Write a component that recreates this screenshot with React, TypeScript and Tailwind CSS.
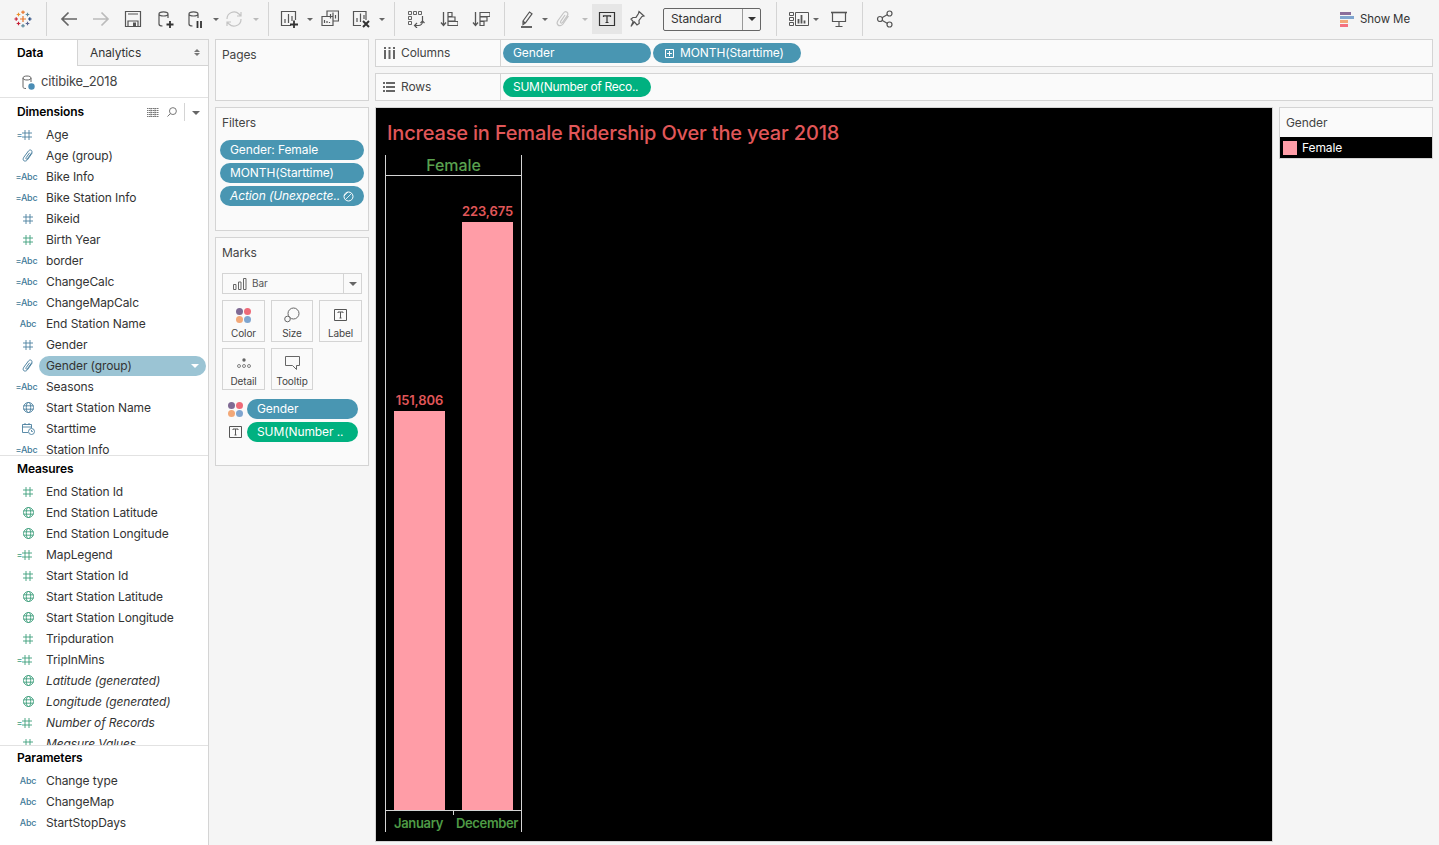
const ink = '#555555'

function Ic({ className = '', children }: { className?: string; children: React.ReactNode }) {
  return (
    <svg viewBox="0 0 18 18" fill="none" stroke={ink} strokeWidth="1.2" className={`w-[18px] h-[18px] shrink-0 ${className}`}>
      {children}
    </svg>
  )
}

function Caret({ className = '', light = false }: { className?: string; light?: boolean }) {
  return (
    <div className={`w-0 h-0 shrink-0 border-x-[3px] border-x-transparent border-t-[3px] mt-[1px] ${light ? 'border-t-[#bbbbbb]' : 'border-t-[#666666]'} ${className}`} />
  )
}

function Divider({ className = '' }: { className?: string }) {
  return <div className={`w-px h-[34px] bg-[#d4d4d4] shrink-0 ${className}`} />
}

function Db({ children }: { children?: React.ReactNode }) {
  return (
    <Ic>
      <path d="M3 4v10c0 1.2 1.4 2 3.5 2M3 4c0-1.3 1.7-2.2 4.5-2.2S12 2.700 12 4s-1.700 2-4.500 2S3 5.300 3 4zM12 4v4" />
      {children}
    </Ic>
  )
}

function Logo() {
  const c = (x: number, y: number, r: number, col: string) => (
    <path d={`M${x - r} ${y}h${2 * r}M${x} ${y - r}v${2 * r}`} stroke={col} strokeWidth="1.200" />
  )
  return (
    <Ic>
      {c(9, 9, 3, '#e8762b')}
      {c(9, 2.200, 1.800, '#e8762b')}
      {c(4.500, 4.500, 1.800, '#eb912b')}
      {c(13.500, 4.500, 1.800, '#5b879b')}
      {c(2.200, 9, 1.800, '#c72037')}
      {c(15.800, 9, 1.800, '#1f447e')}
      {c(4.500, 13.500, 1.800, '#c72037')}
      {c(13.500, 13.500, 1.800, '#5b6591')}
      {c(9, 15.800, 1.800, '#5b879b')}
    </Ic>
  )
}

function Toolbar() {
  return (
    <div className="h-[39px] pb-[1px] flex items-center shrink-0 bg-[#f5f5f5]">
      <div className="ml-[14px]"><Logo /></div>
      <Divider className="ml-[14px]" />
      <Ic className="ml-[13px]"><path d="M17 9H2M8.500 2.500 2 9l6.500 6.500" strokeWidth="1.700" stroke="#666666" /></Ic>
      <Ic className="ml-[14px]"><path d="M1 9h15M9.500 2.500 16 9l-6.500 6.500" strokeWidth="1.700" stroke="#bbbbbb" /></Ic>
      <Ic className="ml-[14px]"><path d="M1.500 1.500h15v15h-15zM4 16.500V11h10v5.500M4 4h10" /><path d="M9 12.500h3v4H9z" fill={ink} stroke="none" /></Ic>
      <div className="ml-[14px]"><Db><path d="M10.500 14.500h7M14 11v7" stroke="#333333" strokeWidth="1.800" /></Db></div>
      <div className="ml-[12px]"><Db><path d="M11.500 11v7M15 11v7" stroke="#333333" strokeWidth="1.800" /></Db></div>
      <Caret className="ml-[9px]" />
      <Ic className="ml-[6px]">
        <path d="M2 9a7 7 0 0 1 12-5l2 2M16 9a7 7 0 0 1-12 5l-2-2M16 2v4h-4M2 16v-4h4" stroke="#c4c4c4" />
      </Ic>
      <Caret className="ml-[10px]" light />
      <Divider className="ml-[9px]" />
      <Ic className="ml-[11px]">
        <path d="M11 15.500H1.500v-14h14V10M5 13V9M8.500 13V4M12 11V6" />
        <path d="M10 14.500h8M14 10.500v7.500" stroke="#333333" strokeWidth="1.800" />
      </Ic>
      <Caret className="ml-[9px]" />
      <Ic className="ml-[8px]">
        <path d="M6 6V1h11.500v10H12M1 6.500h11v9H1zM9.500 8.500V4M12 8.500V2.500M14.500 8.500V5M3.500 13v-3M6 13v-2M8.500 13v-1" />
      </Ic>
      <Ic className="ml-[13px]">
        <path d="M14 10V1.500H1.500v14H9M5 12V8M8.500 12V3.500M12 9V5" />
        <path d="m11 11 6 6M17 11l-6 6" stroke="#333333" strokeWidth="2" />
      </Ic>
      <Caret className="ml-[9px]" />
      <Divider className="ml-[9px]" />
      <Ic className="ml-[12px]">
        <path d="M1.500 1.500h3v3h-3zM6.500 1.500h3v3h-3zM11.500 1.500h3v3h-3zM1.500 6.500h3v3h-3zM1.500 11.500h3v3h-3z" strokeWidth="0.900" />
        <path d="M15.500 6v5.500a4 4 0 0 1-4 4H8" /><path d="m13.500 13 2-2 2 2M10 13l-2.500 2.500L10 18" />
      </Ic>
      <Ic className="ml-[15px]">
        <path d="M3.500 2v13M1 12.500l2.500 3 2.500-3" strokeWidth="1.300" />
        <path d="M8 2h4v4H8zM8 6.500h7v4H8zM8 11h10v4H8z" transform="translate(0 .5)" />
      </Ic>
      <Ic className="ml-[14px]">
        <path d="M3.500 2v13M1 12.500l2.500 3 2.500-3" strokeWidth="1.300" />
        <path d="M8 2h10v4H8zM8 6.500h7v4H8zM8 11h4v4H8z" transform="translate(0 .5)" />
      </Ic>
      <Divider className="ml-[14px]" />
      <Ic className="ml-[13px]">
        <path d="m5 11 6.500-9 2.500 1.800-6.500 9L5 14.500zM7 13l-2-2" />
        <path d="M3 17h11" strokeWidth="1.800" />
      </Ic>
      <Caret className="ml-[6px]" />
      <Ic className="ml-[7px]">
        <path d="M13.500 6 8 14c-1.500 2-4 2-5 1s-1-3 0-4.500L8.500 3c1-1.300 2.500-1.500 3.500-.8s1.200 2.300.3 3.500L7.500 12.500c-.5.700-1.200.8-1.700.4s-.5-1.100 0-1.800L10 5" stroke="#c4c4c4" />
      </Ic>
      <Caret className="ml-[9px]" light />
      <div className="ml-[4px] w-[30px] h-[30px] flex items-center justify-center bg-[#e6e6e6] shrink-0">
        <Ic><path d="M1.500 2.500h15v13h-15z" stroke="#333333" /><path d="M5.500 7V5.800h7V7M9 6v6.500M7.500 12.500h3" stroke="#333333" /></Ic>
      </div>
      <Ic className="ml-[6px]">
        <path d="M11 1.500 16 6l-2 .5-3 4 .2 3L9 15l-2.500-3-3.500 4.500 2.200-5L3 9l2-1.500 3-.2L10.500 3.500z" />
      </Ic>
      <div className="ml-[17px] w-[98px] h-[23px] flex items-center border border-[#666666] rounded-[2px] shrink-0">
        <span className="flex-1 pl-[7px] text-[12px] text-[#333333]">Standard</span>
        <div className="w-[18px] h-full border-l border-[#999999] flex items-center justify-center">
          <div className="w-0 h-0 border-x-[4px] border-x-transparent border-t-[4px] border-t-[#333333]" />
        </div>
      </div>
      <Divider className="ml-[15px]" />
      <svg viewBox="0 0 20 18" fill="none" stroke={ink} className="ml-[12px] w-[20px] h-[18px] shrink-0">
        <path d="M.5 2.500h4v3h-4zM.5 7.500h4v3h-4zM.5 12.500h4v3h-4zM6.500 2.500h13v13h-13z" />
        <path d="M9.500 13.500V9M12.500 13.500V5M15.500 13.500v-3" strokeWidth="1.800" />
      </svg>
      <Caret className="ml-[4px]" />
      <Ic className="ml-[11px]">
        <path d="M1 2.500h16" strokeWidth="1.600" /><path d="M2.500 2.500v9h13v-9M9 11.500v5M5.500 16.500h7" />
      </Ic>
      <Divider className="ml-[14px]" />
      <Ic className="ml-[13px]">
        <circle cx="13.500" cy="3.500" r="2.500" /><circle cx="4" cy="9" r="2.500" /><circle cx="13.500" cy="14.500" r="2.500" />
        <path d="m6 7.800 5.500-3.200M6 10.200l5.500 3.200" />
      </Ic>
      <div className="ml-auto mr-[29px] pt-[1px] flex items-center gap-[6px]">
        <div className="flex flex-col gap-[1px] w-[14px]">
          <div className="h-[3px] w-[11px] bg-[#8a6d9b]" />
          <div className="h-[3px] w-[14px] bg-[#7fa5cf]" />
          <div className="h-[3px] w-[8px] bg-[#f2a878]" />
          <div className="h-[3px] w-[8px] bg-[#f4717f]" />
        </div>
        <span className="text-[11.5px] text-[#333333]">Show Me</span>
      </div>
    </div>
  )
}

function Hash({ color = '#4a7f9e' }: { color?: string }) {
  return (
    <svg viewBox="0 0 10 10" fill="none" stroke={color} strokeWidth="0.900" className="w-[10px] h-[10px]">
      <path d="M3 0v10M7 0v10M0 3h10M0 7h10" />
    </svg>
  )
}

function Globe({ color = '#4a7f9e' }: { color?: string }) {
  return (
    <svg viewBox="0 0 11 11" fill="none" stroke={color} strokeWidth="0.900" className="w-[11px] h-[11px]">
      <circle cx="5.500" cy="5.500" r="5" />
      <ellipse cx="5.500" cy="5.500" rx="2.200" ry="5" />
      <path d="M.5 3.800h10M.5 7.200h10" />
    </svg>
  )
}

function Clip() {
  return (
    <svg viewBox="0 0 12 12" fill="none" stroke="#4a7f9e" strokeWidth="0.900" className="w-[13px] h-[13px]">
      <path d="M9.500 3.500 5 10c-1 1.300-2.600 1.400-3.400.7S.9 8.800 1.700 7.600L6 1.800c.8-1 1.900-1.100 2.600-.6s.8 1.600.2 2.500L5 9c-.4.500-.9.600-1.200.3s-.3-.8 0-1.300L7 3.500" />
    </svg>
  )
}

function Calendar() {
  return (
    <svg viewBox="0 0 13 13" fill="none" stroke="#4a7f9e" strokeWidth="0.900" className="w-[13px] h-[13px]">
      <path d="M6 10.500H.5v-8h9V6M.5 5h9M3 1v2M7 1v2" />
      <circle cx="9.500" cy="9.500" r="3" />
      <path d="M9.500 8v1.500h1.300" />
    </svg>
  )
}

type FieldKind = 'calcHash' | 'clip' | 'calcAbc' | 'hash' | 'greenHash' | 'abc' | 'globe' | 'cal' | 'greenGlobe' | 'calcGreenHash'

function FieldIcon({ kind }: { kind: FieldKind }) {
  const blue = '#4a7f9e'
  const green = '#3d9e7c'
  const eq = (color: string) => <span className="text-[9px] leading-none ml-[-7px]" style={{ color }}>=</span>
  return (
    <div className="w-[38px] pl-[18px] h-full flex items-center justify-center shrink-0">
      {kind === 'calcHash' && <>{eq(blue)}<Hash /></>}
      {kind === 'calcGreenHash' && <>{eq(green)}<Hash color={green} /></>}
      {kind === 'clip' && <Clip />}
      {kind === 'hash' && <Hash />}
      {kind === 'greenHash' && <Hash color={green} />}
      {kind === 'globe' && <Globe />}
      {kind === 'greenGlobe' && <Globe color={green} />}
      {kind === 'cal' && <Calendar />}
      {kind === 'abc' && <span className="text-[9px] font-medium tracking-[-0.2px] text-[#3f7a99]">Abc</span>}
      {kind === 'calcAbc' && <span className="text-[9px] font-medium tracking-[-0.2px] text-[#3f7a99] ml-[-3px] whitespace-nowrap">=Abc</span>}
    </div>
  )
}

function Field({ kind, name, italic, selected }: { kind: FieldKind; name: string; italic?: boolean; selected?: boolean }) {
  return (
    <div className="h-[21px] flex items-center shrink-0 text-[12px] text-[#333333]">
      <FieldIcon kind={kind} />
      {selected ? (
        <div className="flex-1 mr-[2px] ml-[1px] h-[20px] rounded-full bg-[#9bc4d4] flex items-center justify-between pl-[7px] pr-[7px]">
          <span>{name}</span>
          <div className="w-0 h-0 border-x-[4px] border-x-transparent border-t-[4px] border-t-white" />
        </div>
      ) : (
        <span className={`pl-[8px] whitespace-nowrap ${italic ? 'italic' : ''}`}>{name}</span>
      )}
    </div>
  )
}

const dimensions: { kind: FieldKind; name: string; selected?: boolean }[] = [
  { kind: 'calcHash', name: 'Age' },
  { kind: 'clip', name: 'Age (group)' },
  { kind: 'calcAbc', name: 'Bike Info' },
  { kind: 'calcAbc', name: 'Bike Station Info' },
  { kind: 'hash', name: 'Bikeid' },
  { kind: 'greenHash', name: 'Birth Year' },
  { kind: 'calcAbc', name: 'border' },
  { kind: 'calcAbc', name: 'ChangeCalc' },
  { kind: 'calcAbc', name: 'ChangeMapCalc' },
  { kind: 'abc', name: 'End Station Name' },
  { kind: 'hash', name: 'Gender' },
  { kind: 'clip', name: 'Gender (group)', selected: true },
  { kind: 'calcAbc', name: 'Seasons' },
  { kind: 'globe', name: 'Start Station Name' },
  { kind: 'cal', name: 'Starttime' },
  { kind: 'calcAbc', name: 'Station Info' },
]

const measures: { kind: FieldKind; name: string; italic?: boolean }[] = [
  { kind: 'greenHash', name: 'End Station Id' },
  { kind: 'greenGlobe', name: 'End Station Latitude' },
  { kind: 'greenGlobe', name: 'End Station Longitude' },
  { kind: 'calcGreenHash', name: 'MapLegend' },
  { kind: 'greenHash', name: 'Start Station Id' },
  { kind: 'greenGlobe', name: 'Start Station Latitude' },
  { kind: 'greenGlobe', name: 'Start Station Longitude' },
  { kind: 'greenHash', name: 'Tripduration' },
  { kind: 'calcGreenHash', name: 'TripInMins' },
  { kind: 'greenGlobe', name: 'Latitude (generated)', italic: true },
  { kind: 'greenGlobe', name: 'Longitude (generated)', italic: true },
  { kind: 'calcGreenHash', name: 'Number of Records', italic: true },
  { kind: 'greenHash', name: 'Measure Values', italic: true },
]

function Sidebar() {
  return (
    <div className="w-[209px] shrink-0 bg-white border-r border-[#d4d4d4] flex flex-col overflow-hidden">
      <div className="h-[29px] pb-[2px] flex shrink-0 text-[12px]">
        <div className="w-[77px] flex items-center pl-[17px] font-semibold text-black border-t border-[#d4d4d4]">Data</div>
        <div className="flex-1 flex items-center justify-between bg-[#f5f5f5] border border-r-0 border-[#d4d4d4] pl-[12px] pr-[8px] text-[#333333]">
          <span>Analytics</span>
          <div className="flex flex-col gap-[1px]">
            <div className="w-0 h-0 border-x-[3px] border-x-transparent border-b-[3px] border-b-[#777777]" />
            <div className="w-0 h-0 border-x-[3px] border-x-transparent border-t-[3px] border-t-[#777777]" />
          </div>
        </div>
      </div>
      <div className="h-[30px] pb-[1px] flex items-center shrink-0 border-b border-[#e2e2e2] pl-[22px] text-[13px] tracking-[-0.2px] text-[#444444]">
        <svg viewBox="0 0 13 15" fill="none" stroke="#666666" className="w-[13px] h-[15px] mr-[6px]">
          <path d="M1 3v9c0 1 1 1.500 3 1.500M1 3c0-1.200 1.500-2 4-2s4 .8 4 2-1.500 2-4 2-4-.8-4-2zM9 3v4" />
          <circle cx="9.500" cy="11.500" r="3.200" fill="#4a8db5" stroke="none" />
        </svg>
        citibike_2018
      </div>
      <div className="h-[26px] pt-[2px] flex items-center shrink-0 pl-[17px] text-[12px] font-semibold text-black">
        <span className="flex-1">Dimensions</span>
        <svg viewBox="0 0 12 9" fill="none" stroke="#777777" className="w-[12px] h-[9px]">
          <path d="M0 .5h12M0 2.500h12M0 4.500h12M0 6.500h12M0 8.500h12M4 0v9M8 0v9" strokeDasharray="1.500 .5" />
        </svg>
        <svg viewBox="0 0 11 11" fill="none" stroke="#777777" strokeWidth="1.100" className="w-[10px] h-[10px] ml-[8px]">
          <circle cx="6.500" cy="4.500" r="3.800" /><path d="m3.800 7.200-3.300 3.300" />
        </svg>
        <div className="w-px h-[18px] bg-[#d4d4d4] ml-[7px]" />
        <Caret className="ml-[7px] mr-[8px] border-x-[4px] border-t-[4px]" />
      </div>
      <div className="h-[332px] shrink-0 flex flex-col overflow-hidden border-b border-[#e2e2e2]">
        {dimensions.map((f) => (
          <Field key={f.name} kind={f.kind} name={f.name} selected={f.selected} />
        ))}
      </div>
      <div className="h-[25px] flex items-center shrink-0 pl-[17px] text-[12px] font-semibold text-black">Measures</div>
      <div className="h-[265px] shrink-0 flex flex-col overflow-hidden border-b border-[#e2e2e2]">
        {measures.map((f) => (
          <Field key={f.name} kind={f.kind} name={f.name} italic={f.italic} />
        ))}
      </div>
      <div className="h-[24px] flex items-center shrink-0 pl-[17px] text-[12px] font-semibold text-black">Parameters</div>
      <Field kind="abc" name="Change type" />
      <Field kind="abc" name="ChangeMap" />
      <Field kind="abc" name="StartStopDays" />
    </div>
  )
}

function Pill({ children, green, className = '' }: { children: React.ReactNode; green?: boolean; className?: string }) {
  return (
    <div className={`h-[20px] rounded-full flex items-center pl-[10px] text-[12px] text-white whitespace-nowrap overflow-hidden ${green ? 'bg-[#00b180]' : 'bg-[#4996b2]'} ${className}`}>
      {children}
    </div>
  )
}

function Card({ title, className = '', titleClass = 'pl-[2px]', children }: { title: string; className?: string; titleClass?: string; children?: React.ReactNode }) {
  return (
    <div className={`bg-[#fafafa] border border-[#d4d4d4] px-[4px] ${className}`}>
      <div className={`h-[29px] flex items-center text-[12px] text-[#444444] ${titleClass}`}>{title}</div>
      {children}
    </div>
  )
}

function MarkButton({ label, children }: { label: string; children: React.ReactNode }) {
  return (
    <div className="h-[42px] bg-[#fafafa] border border-[#d4d4d4] flex flex-col items-center justify-end">
      <div className="h-[20px] flex items-center justify-center">{children}</div>
      <div className="text-[10px] leading-[16px] text-[#444444]">{label}</div>
    </div>
  )
}

function FourDots({ className = '' }: { className?: string }) {
  return (
    <div className={`grid grid-cols-2 gap-[1px] w-[15px] ${className}`}>
      <div className="w-[7px] h-[7px] rounded-full bg-[#7f6a94]" />
      <div className="w-[7px] h-[7px] rounded-full bg-[#ee6a78]" />
      <div className="w-[7px] h-[7px] rounded-full bg-[#f2a878]" />
      <div className="w-[7px] h-[7px] rounded-full bg-[#7fa5cf]" />
    </div>
  )
}

function TBox({ className = '' }: { className?: string }) {
  return (
    <svg viewBox="0 0 13 12" fill="none" stroke="#555555" className={`w-[13px] h-[12px] ${className}`}>
      <path d="M.5.5h12v11H.5zM4 4V3h5v1M6.500 3v6M5.500 9h2" />
    </svg>
  )
}

function MiddlePanel() {
  return (
    <div className="w-[154px] shrink-0 flex flex-col gap-[6px]">
      <Card title="Pages" className="h-[62px]" />
      <Card title="Filters" className="h-[124px]">
        <div className="flex flex-col gap-[3px] mt-[3px]">
          <Pill>Gender: Female</Pill>
          <Pill>MONTH(Starttime)</Pill>
          <Pill className="pr-[10px] justify-between">
            <span className="italic">Action (Unexpecte..</span>
            <svg viewBox="0 0 11 11" fill="none" stroke="white" className="w-[11px] h-[11px] shrink-0">
              <circle cx="5.500" cy="5.500" r="4.500" /><path d="m2.500 8.500 6-6M1 5 5 1" strokeWidth=".8" />
            </svg>
          </Pill>
        </div>
      </Card>
      <Card title="Marks" className="h-[229px] px-[6px]" titleClass="">
        <div className="h-[21px] mt-[6px] bg-[#fafafa] border border-[#d4d4d4] flex items-center">
          <svg viewBox="0 0 14 12" fill="none" stroke="#666666" className="w-[14px] h-[12px] ml-[10px]">
            <path d="M.5 6.500h2.500v5H.5zM5.500 4h2.500v7.500H5.500zM10.500.5H13v11h-2.500z" />
          </svg>
          <span className="flex-1 pl-[5px] text-[10px] text-[#555555]">Bar</span>
          <div className="w-[18px] h-full border-l border-[#d4d4d4] flex items-center justify-center">
            <div className="w-0 h-0 border-x-[4px] border-x-transparent border-t-[4px] border-t-[#666666]" />
          </div>
        </div>
        <div className="grid grid-cols-[43px_42px_43px] gap-x-[6px] gap-y-[6px] mt-[6px]">
          <MarkButton label="Color"><FourDots /></MarkButton>
          <MarkButton label="Size">
            <svg viewBox="0 0 16 16" fill="none" stroke="#666666" className="w-[16px] h-[16px]">
              <circle cx="9.500" cy="6.500" r="5.500" /><circle cx="3.500" cy="12" r="2.800" fill="#fafafa" />
            </svg>
          </MarkButton>
          <MarkButton label="Label"><TBox /></MarkButton>
          <MarkButton label="Detail">
            <svg viewBox="0 0 14 12" fill="none" stroke="#666666" strokeWidth=".8" className="w-[14px] h-[12px]">
              <circle cx="7" cy="3" r="1.700" fill="#666666" stroke="none" />
              <circle cx="2" cy="9" r="1.500" /><circle cx="7" cy="9" r="1.500" /><circle cx="12" cy="9" r="1.500" />
            </svg>
          </MarkButton>
          <MarkButton label="Tooltip">
            <svg viewBox="0 0 15 14" fill="none" stroke="#666666" className="w-[15px] h-[14px]">
              <path d="M.5.5h14v9h-3v4l-4-4h-7z" />
            </svg>
          </MarkButton>
        </div>
        <div className="flex flex-col gap-[3px] mt-[9px]">
          <div className="flex items-center pl-[6px] pr-[4px]">
            <FourDots className="mr-[4px]" />
            <Pill className="flex-1">Gender</Pill>
          </div>
          <div className="flex items-center pl-[6px] pr-[4px]">
            <div className="w-[15px] mr-[4px] flex justify-center"><TBox /></div>
            <Pill green className="flex-1">SUM(Number ..</Pill>
          </div>
        </div>
      </Card>
    </div>
  )
}

function Shelf({ label, icon, children }: { label: string; icon: React.ReactNode; children: React.ReactNode }) {
  return (
    <div className="h-[28px] bg-[#fafafa] border border-[#d4d4d4] flex items-center shrink-0">
      <div className="w-[125px] h-full border-r border-[#d4d4d4] flex items-center pl-[7px] text-[12px] text-[#444444] shrink-0">
        <div className="w-[12px] mr-[6px] flex justify-center">{icon}</div>
        {label}
      </div>
      <div className="flex gap-[2px] pl-[2px]">{children}</div>
    </div>
  )
}

function Bar({ value, height }: { value: string; height: number }) {
  return (
    <div className="w-[51px] flex flex-col items-center">
      <div className="text-[13px] font-semibold leading-[21px] text-[#e15759] whitespace-nowrap">{value}</div>
      <div className="w-full bg-[#ff9da7]" style={{ height }} />
    </div>
  )
}

function Chart() {
  return (
    <div className="flex-1 bg-black flex flex-col overflow-hidden">
      <div className="h-[47px] flex items-center pl-[11px] pt-[3px] text-[20px] tracking-[-0.17px] font-medium text-[#e15759] shrink-0 whitespace-nowrap">
        Increase in Female Ridership Over the year 2018
      </div>
      <div className="w-[137px] ml-[9px] border-x border-[#d4d4d4] flex flex-col">
        <div className="h-[21px] border-b border-[#d4d4d4] flex items-center justify-center text-[16px] font-medium text-[#59a14f]">Female</div>
        <div className="h-[635px] border-b border-[#d4d4d4] flex items-end gap-[17px] pl-[8px]">
          <Bar value="151,806" height={399} />
          <Bar value="223,675" height={588} />
        </div>
        <div className="relative h-[21px] pt-[5px] flex items-center text-[13px] tracking-[-0.35px] font-semibold text-[#4e9a46] whitespace-nowrap pl-[8px] gap-[13px]">
          <div className="absolute left-[67px] top-0 w-px h-[4px] bg-[#d4d4d4]" />
          <span>January</span>
          <span>December</span>
        </div>
      </div>
    </div>
  )
}

export default function App() {
  return (
    <div className="w-[1439px] h-[845px] flex flex-col overflow-hidden bg-[#f5f5f5] tracking-[-0.1px] font-['Inter','Liberation_Sans',sans-serif]">
      <Toolbar />
      <div className="flex-1 flex min-h-0">
        <Sidebar />
        <div className="flex-1 flex gap-[6px] pl-[6px] pr-[6px] pb-[3px] min-w-0">
          <MiddlePanel />
          <div className="flex-1 flex flex-col gap-[6px] min-w-0">
            <Shelf
              label="Columns"
              icon={
                <svg viewBox="0 0 11 12" fill="#666666" className="w-[11px] h-[12px]">
                  <path d="M0 3h2v9H0zM4.500 3h2v9h-2zM9 3h2v9H9zM0 0h2v2H0zM4.500 0h2v2h-2zM9 0h2v2H9z" />
                </svg>
              }
            >
              <Pill className="w-[148px]">Gender</Pill>
              <Pill className="w-[148px]">
                <svg viewBox="0 0 9 9" fill="none" stroke="white" className="w-[9px] h-[9px] mr-[6px] ml-[2px] shrink-0">
                  <path d="M.5.5h8v8h-8zM4.500 2v5M2 4.500h5" />
                </svg>
                MONTH(Starttime)
              </Pill>
            </Shelf>
            <Shelf
              label="Rows"
              icon={
                <svg viewBox="0 0 12 10" fill="#666666" className="w-[12px] h-[10px]">
                  <path d="M0 0h2v2H0zM3 0h9v2H3zM0 4h2v2H0zM3 4h9v2H3zM0 8h2v2H0zM3 8h9v2H3z" />
                </svg>
              }
            >
              <Pill green className="w-[148px] tracking-[-0.3px]">SUM(Number of Reco..</Pill>
            </Shelf>
            <div className="flex-1 flex gap-[6px] min-h-0">
              <div className="flex-1 border border-[#d4d4d4] flex min-w-0"><Chart /></div>
              <div className="w-[154px] h-[52px] shrink-0 bg-[#fafafa] border border-[#d4d4d4] flex flex-col">
                <div className="h-[29px] flex items-center pl-[6px] text-[12px] text-[#444444]">Gender</div>
                <div className="h-[21px] bg-black flex items-center pl-[3px] text-[12px] text-white">
                  <div className="w-[14px] h-[14px] bg-[#ff9da7] mr-[5px]" />
                  Female
                </div>
              </div>
            </div>
          </div>
        </div>
      </div>
    </div>
  )
}
